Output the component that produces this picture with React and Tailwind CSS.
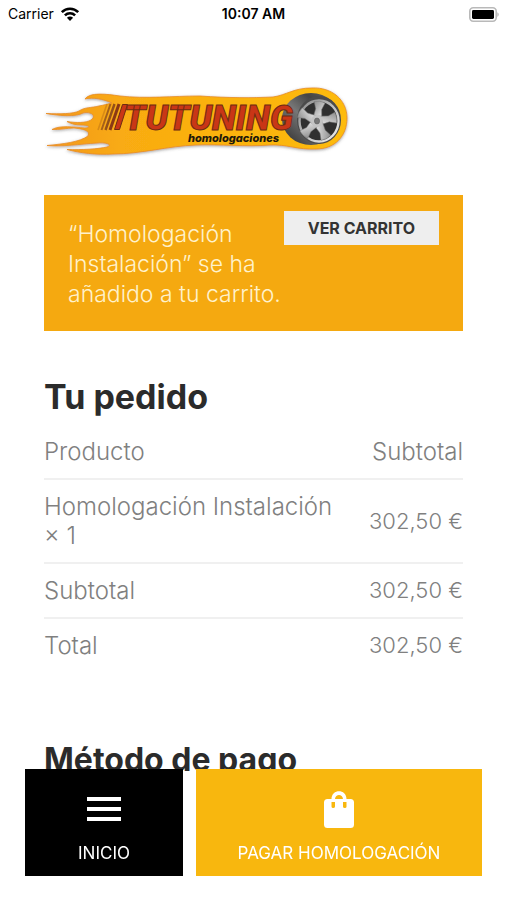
const orderLines = [
  { label: 'Homologación Instalación ×\u00a01', amount: '302,50 €' },
  { label: 'Subtotal', amount: '302,50 €' },
  { label: 'Total', amount: '302,50 €' },
]

const spokes = [8, 80, 152, 224, 296]

function StatusBar() {
  return (
    <div className="grid grid-cols-3 items-center h-7 px-2 text-black">
      <div className="flex items-center gap-1.5 text-sm">
        <span>Carrier</span>
        <svg width="20" height="16" viewBox="0 0 20 16" aria-hidden="true">
          <g fill="none" stroke="#000" strokeWidth="2.6">
            <path d="M1.8 6.2C6.4 1.6 13.6 1.6 18.2 6.2" />
            <path d="M4.9 9.4C7.8 6.6 12.2 6.6 15.1 9.4" />
          </g>
          <path d="M10 15L6.9 11.7C8.6 10.2 11.4 10.2 13.1 11.7Z" />
        </svg>
      </div>
      <span className="text-center text-sm font-semibold">10:07 AM</span>
      <svg className="justify-self-end" width="30" height="15" viewBox="0 0 30 15" aria-hidden="true">
        <rect x="0.8" y="0.8" width="26.4" height="13.4" rx="3.4" fill="#fff" stroke="#b9b9b9" strokeWidth="1.6" />
        <rect x="3" y="3" width="22" height="9" rx="1.4" />
        <path d="M28.3 5.2C30.2 6 30.2 9 28.3 9.8Z" fill="#b9b9b9" />
      </svg>
    </div>
  )
}

function Logo() {
  return (
    <svg className="max-w-full -ml-1" width="310" height="85" viewBox="0 0 310 85" role="img" aria-label="Tutuning homologaciones">
      <defs>
        <linearGradient id="flame" x1="0" y1="0" x2="1" y2="0">
          <stop offset="0" stopColor="#f2971f" />
          <stop offset="0.25" stopColor="#f9ab12" />
          <stop offset="1" stopColor="#fdbb0a" />
        </linearGradient>
        <linearGradient id="tire" x1="0" y1="1" x2="1" y2="0">
          <stop offset="0" stopColor="#2a2a2a" />
          <stop offset="0.45" stopColor="#777" />
          <stop offset="0.7" stopColor="#444" />
          <stop offset="1" stopColor="#6b6b6b" />
        </linearGradient>
        <linearGradient id="rim" x1="0" y1="0" x2="1" y2="1">
          <stop offset="0" stopColor="#8b8b8b" />
          <stop offset="1" stopColor="#f1f1f1" />
        </linearGradient>
        <filter id="glow" x="-5%" y="-15%" width="110%" height="130%">
          <feDropShadow dx="0" dy="1" stdDeviation="1.8" floodColor="#555" floodOpacity="0.55" />
        </filter>
      </defs>

      <path
        filter="url(#glow)"
        fill="url(#flame)"
        stroke="#e88d22"
        strokeWidth="0.8"
        d="M45 19C50 12 66 14 80 16C106 19 132 16 160 16C188 18 212 18 233 17C247 15 253 8 272 8C292 7 307 20 307 38C307 56 295 69 276 69C258 70 246 64 230 65C206 67 180 64 156 65C128 66 101 74 73 74C56 75 40 73 27 69.5C42 70 58 69 67 67C73 65 67 62 57 63C40 64 22 67 7 65.5C23 64 40 62 48 56C51 50 42 49 34 48C27 48 19 50 12 49.5C20 45 34 47 45 48C51 48 50 45 42 45C36 45 31 44 27 41.5C36 43 46 43 51 40C57 36 51 31 43 33C36 37 20 36 6 33.5C20 34 33 34 39 31C45 27 51 28 59 26C64 25 68 24 72 23C63 19 53 17 45 19Z"
      />

      {/* speed stripes in front of the name */}
      <path d="M67 24L58 50" stroke="#d88a16" strokeWidth="1.6" />
      <path d="M70.500 24L61.500 50" stroke="#a4601a" strokeWidth="2" />
      <path d="M74.500 24L65.500 50" stroke="#93501a" strokeWidth="2.4" />
      <path d="M79 24L70 50" stroke="#8a3915" strokeWidth="3" />
      <path d="M82.500 24.500H87.500L79.500 49.500H74.500Z" fill="#c93616" stroke="#6d2b12" strokeWidth="1" />

      {/* tire and rim */}
      <ellipse cx="271" cy="39" rx="29" ry="26" fill="url(#tire)" />
      <ellipse cx="279" cy="40" rx="22" ry="24" fill="#4b4b4b" />
      <ellipse cx="279" cy="41" rx="19.500" ry="20.500" fill="#303030" stroke="url(#rim)" strokeWidth="2.4" />
      <g transform="translate(277 41)" fill="url(#rim)" stroke="#777" strokeWidth="0.500">
        {spokes.map((angle) => (
          <path key={angle} transform={`rotate(${angle})`} d="M-4.500 -2L-3 -12L-5.500 -19Q0 -21 5.500 -19L3 -12L4.500 -2Z" />
        ))}
        <circle r="6" stroke="none" fill="#c4c4c4" />
        <ellipse rx="2.6" ry="3" fill="#777" stroke="#555" />
      </g>

      <text x="84" y="50" className="font-['Roboto'] text-[35px] font-black italic" fill="#c93616" stroke="#6d2b12" strokeWidth="1">
        TUTUNING
      </text>
      <text x="148" y="62" className="font-['Inter'] text-[11px] font-extrabold italic" fill="#21180a">
        homologaciones
      </text>
    </svg>
  )
}

function CartNotice() {
  return (
    <section className="flow-root bg-[#f5a910] px-6 pt-4 pb-[22px] text-[23px] leading-[30px] font-light text-[#fff2cc]">
      <a href="#carrito" className="float-right bg-[#eeeeee] px-6 py-2 text-base leading-[18px] font-bold text-[#333333]">
        VER CARRITO
      </a>
      <p className="pt-2">
        “Homologación<br />
        Instalación” se ha<br />
        añadido a tu carrito.
      </p>
    </section>
  )
}

function OrderTable() {
  return (
    <table className="w-full text-2xl leading-[29px] font-light text-[#808080]">
      <thead>
        <tr className="border-b-2 border-[#f0f0f0] leading-[29px]">
          <th className="py-3 text-left font-light">Producto</th>
          <th className="py-3 text-right font-light">Subtotal</th>
        </tr>
      </thead>
      <tbody>
        {orderLines.map((line) => (
          <tr key={line.label} className="border-b-2 border-[#f0f0f0] leading-[29px] last:border-b-0">
            <td className="py-3 pr-4">{line.label}</td>
            <td className="py-3 text-right text-[22px] leading-[29px] whitespace-nowrap">{line.amount}</td>
          </tr>
        ))}
      </tbody>
    </table>
  )
}

function BottomBar() {
  return (
    <nav className="fixed inset-x-0 bottom-0 flex gap-[13px] px-[25px] pb-6 text-[17px] leading-6 text-white">
      <button type="button" className="flex flex-col items-center w-[158px] h-[107px] pt-5 bg-black">
        <svg width="40" height="40" viewBox="0 0 40 40" fill="#fff" aria-hidden="true">
          <path d="M3 8H37V12H3ZM3 18H37V22H3ZM3 28H37V32H3Z" />
        </svg>
        <span className="mt-3">INICIO</span>
      </button>
      <button type="button" className="flex flex-1 flex-col items-center h-[107px] pt-5 bg-[#f8b70e]">
        <svg width="40" height="40" viewBox="0 0 40 40" fill="#fff" aria-hidden="true">
          <path
            fillRule="evenodd"
            d="M12.500 10C12.500 -0.500 27.500 -0.500 27.500 10H31.500Q35 10 35 13.500V35.500Q35 39 31.500 39H8.500Q5 39 5 35.500V13.500Q5 10 8.500 10ZM16 10H24C23.500 4.500 16.500 4.500 16 10ZM12.500 13V17.500Q12.500 19 14.200 19T16 17.500V13ZM24 13V17.500Q24 19 25.800 19T27.500 17.500V13Z"
          />
        </svg>
        <span className="mt-3">PAGAR HOMOLOGACIÓN</span>
      </button>
    </nav>
  )
}

export default function App() {
  return (
    <div className="min-h-screen bg-white font-['Inter','Liberation_Sans',sans-serif]">
      <StatusBar />
      <main className="px-11 pt-[52px]">
        <header className="mb-[30px]">
          <Logo />
        </header>
        <CartNotice />
        <h2 className="mt-[46px] mb-2 text-[34px] leading-10 font-bold text-[#2b2b2b]">Tu pedido</h2>
        <OrderTable />
        <h2 className="mt-[68px] text-[32px] leading-10 font-bold text-[#2b2b2b]">Método de pago</h2>
      </main>
      <BottomBar />
    </div>
  )
}
